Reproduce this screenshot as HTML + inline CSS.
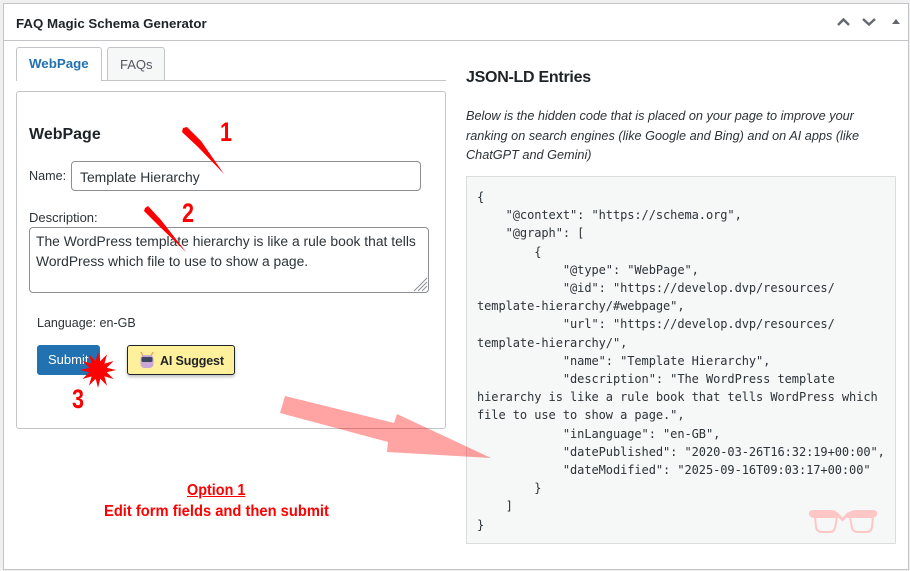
<!DOCTYPE html>
<html><head><meta charset="utf-8"><style>
html,body{margin:0;padding:0;background:#f0f0f1}
body{width:910px;height:571px;position:relative;overflow:hidden;font-family:"Liberation Sans",sans-serif;color:#2c3338}
.a{position:absolute;white-space:pre}
.b{position:absolute;box-sizing:border-box}
.c{position:absolute;left:477px;font:12px/18.2px "DejaVu Sans Mono","Liberation Mono",monospace;letter-spacing:-.07px;color:#2c3338;white-space:pre}
</style></head><body>
<div class="b" style="left:3px;top:3px;width:906px;height:567px;border:1px solid #c3c4c7;background:#fff"></div>
<div class="b" style="left:4px;top:40px;width:904px;height:1px;background:#c3c4c7"></div>
<div class="a" style="left:16px;top:15px;font:bold 13.3px/18px 'Liberation Sans',sans-serif;color:#1d2327">FAQ Magic Schema Generator</div>
<svg class="b" style="left:830px;top:12px" width="75" height="20"><path d="M8 13l5.5-5.5 5.5 5.5M33 7l6 5.5 6-5.5" fill="none" stroke="#646970" stroke-width="2.4"/><path d="M62 12l4-5 4 5z" fill="#646970"/></svg>

<div class="b" style="left:16px;top:80px;width:430px;height:1px;background:#c3c4c7"></div>
<div class="b" style="left:16px;top:47px;width:86px;height:34px;border:1px solid #c3c4c7;border-bottom:0;border-radius:3px 3px 0 0;background:#fff"></div>
<div class="a" style="left:29px;top:55px;font:bold 13.3px/18px 'Liberation Sans',sans-serif;color:#2271b1">WebPage</div>
<div class="b" style="left:107px;top:47px;width:58px;height:33px;border:1px solid #c3c4c7;border-bottom:0;border-radius:3px 3px 0 0;background:#f6f7f7"></div>
<div class="a" style="left:120px;top:56px;font:13px/18px 'Liberation Sans',sans-serif;color:#50575e">FAQs</div>

<div class="b" style="left:16px;top:91px;width:430px;height:338px;border:1px solid #c3c4c7;border-radius:3px;background:#fff"></div>
<div class="a" style="left:29px;top:125px;font:bold 16px/20px 'Liberation Sans',sans-serif;color:#1d2327">WebPage</div>
<div class="a" style="left:29px;top:167px;font:12.6px/18px 'Liberation Sans',sans-serif">Name:</div>
<div class="b" style="left:71px;top:161px;width:350px;height:30px;border:1px solid #8c8f94;border-radius:4px;background:#fff"></div>
<div class="a" style="left:80px;top:168px;font:13.9px/18px 'Liberation Sans',sans-serif">Template Hierarchy</div>
<div class="a" style="left:29px;top:208.5px;font:13px/18px 'Liberation Sans',sans-serif">Description:</div>
<div class="b" style="left:29px;top:227px;width:400px;height:66px;border:1px solid #8c8f94;border-radius:4px;background:#fff"></div>
<div class="a" style="left:36px;top:231px;font:13.85px/20px 'Liberation Sans',sans-serif">The WordPress template hierarchy is like a rule book that tells
WordPress which file to use to show a page.</div>
<svg class="b" style="left:412px;top:276px" width="16" height="16"><path d="M2 15L15 2M6 15L15 6M10 15L15 10" stroke="#8c8f94" stroke-width="1"/></svg>
<div class="a" style="left:37px;top:314px;font:12.5px/18px 'Liberation Sans',sans-serif">Language: en-GB</div>
<div class="b" style="left:37px;top:345px;width:63px;height:30px;background:#2271b1;border-radius:3px"></div>
<div class="a" style="left:48px;top:351px;font:13px/18px 'Liberation Sans',sans-serif;color:#fff">Submit</div>
<div class="b" style="left:127px;top:345px;width:108px;height:30px;background:#fff09b;border:1px solid #1d2327;border-radius:3px;box-shadow:0 2px 3px rgba(0,0,0,.25)"></div>
<svg class="b" style="left:139px;top:351px" width="16" height="18"><path d="M2 1l2 4M14 1l-2 4" stroke="#e0a060" stroke-width="1.3"/><rect x="1.5" y="4" width="13" height="13" rx="4" fill="#c9a8d8"/><rect x="2.5" y="6" width="11" height="5" rx="1.5" fill="#3d4660"/></svg>
<div class="a" style="left:160px;top:352px;font:bold 12.5px/18px 'Liberation Sans',sans-serif;letter-spacing:-.14px;color:#1d2327">AI Suggest</div>

<div class="a" style="left:466px;top:68px;font:bold 16px/20px 'Liberation Sans',sans-serif;letter-spacing:-.27px;color:#1d2327">JSON-LD Entries</div>
<div class="a" style="left:466px;top:107px;font:italic 12.7px/19.5px 'Liberation Sans',sans-serif">Below is the hidden code that is placed on your page to improve your
ranking on search engines (like Google and Bing) and on AI apps (like
ChatGPT and Gemini)</div>
<div class="b" style="left:466px;top:176px;width:430px;height:368px;background:#f6f7f7;border:1px solid #dcdcde"></div>
<div class="c" style="top:188px">{
    "@context": "https://schema.org",
    "@graph": [
        {
            "@type": "WebPage",
            "@id": "https://develop.dvp/resources/
template-hierarchy/#webpage",
            "url": "https://develop.dvp/resources/
template-hierarchy/",
            "name": "Template Hierarchy",
            "description": "The WordPress template
hierarchy is like a rule book that tells WordPress which
file to use to show a page.",
            "inLanguage": "en-GB",
            "datePublished": "2020-03-26T16:32:19+00:00",
            "dateModified": "2025-09-16T09:03:17+00:00"
        }
    ]
}</div>

<svg class="b" style="left:0;top:0" width="910" height="571">
<path d="M285 396L280 413L388 442L387 452L491 458L397 414L394 423Z" fill="#ff0000" fill-opacity=".36"/>
<path d="M809 512Q810 510 814 510L831 510Q836 510 838 514L838 518L814 518Q808 517 809 512ZM877 512Q876 510 872 510L856 510Q850 510 847 514L847 518L872 518Q878 517 877 512Z" fill="#ffc6c6"/>
<path d="M836 513L842.500 519.500L849 513" fill="none" stroke="#ffc6c6" stroke-width="3"/>
<path d="M815 516L816 527Q817 532 822 532L830 532Q834 532 835 528L837 517M850 517L852 528Q853 532 858 532L867 532Q871 532 872 527L873 516" fill="none" stroke="#ffc6c6" stroke-width="2"/>
<path d="M183 128L187 127L201 141L224 174L198 147L182 132Z" fill="#f00"/>
<path d="M145 208L148 206L161 220L186 252L159 226L144 211Z" fill="#f00"/>
<path d="M116 370L106.7 372.3L113.6 379L104.4 376.4L107 385.6L100.3 378.7L98 388L95.7 378.7L89 385.6L91.6 376.4L82.4 379L89.3 372.3L80 370L89.3 367.7L82.4 361L91.6 363.6L89 354.4L95.7 361.3L98 352L100.3 361.3L107 354.4L104.4 363.6L113.6 361L106.7 367.7Z" fill="#f00"/>
</svg>
<div class="a" style="left:220px;top:116px;font:bold 27px/32px 'Liberation Sans',sans-serif;color:#f00;transform:scaleX(.8);transform-origin:left">1</div>
<div class="a" style="left:182px;top:197px;font:bold 27px/32px 'Liberation Sans',sans-serif;color:#f00;transform:scaleX(.8);transform-origin:left">2</div>
<div class="a" style="left:72px;top:383px;font:bold 27px/32px 'Liberation Sans',sans-serif;color:#f00;transform:scaleX(.8);transform-origin:left">3</div>
<div class="a" style="left:187px;top:481px;font:bold 16px/19px 'Liberation Sans',sans-serif;color:#f00;text-decoration:underline;transform:scaleX(.9);transform-origin:left">Option 1</div>
<div class="a" style="left:104px;top:502px;font:bold 16px/19px 'Liberation Sans',sans-serif;color:#f00;transform:scaleX(.92);transform-origin:left">Edit form fields and then submit</div>
</body></html>
